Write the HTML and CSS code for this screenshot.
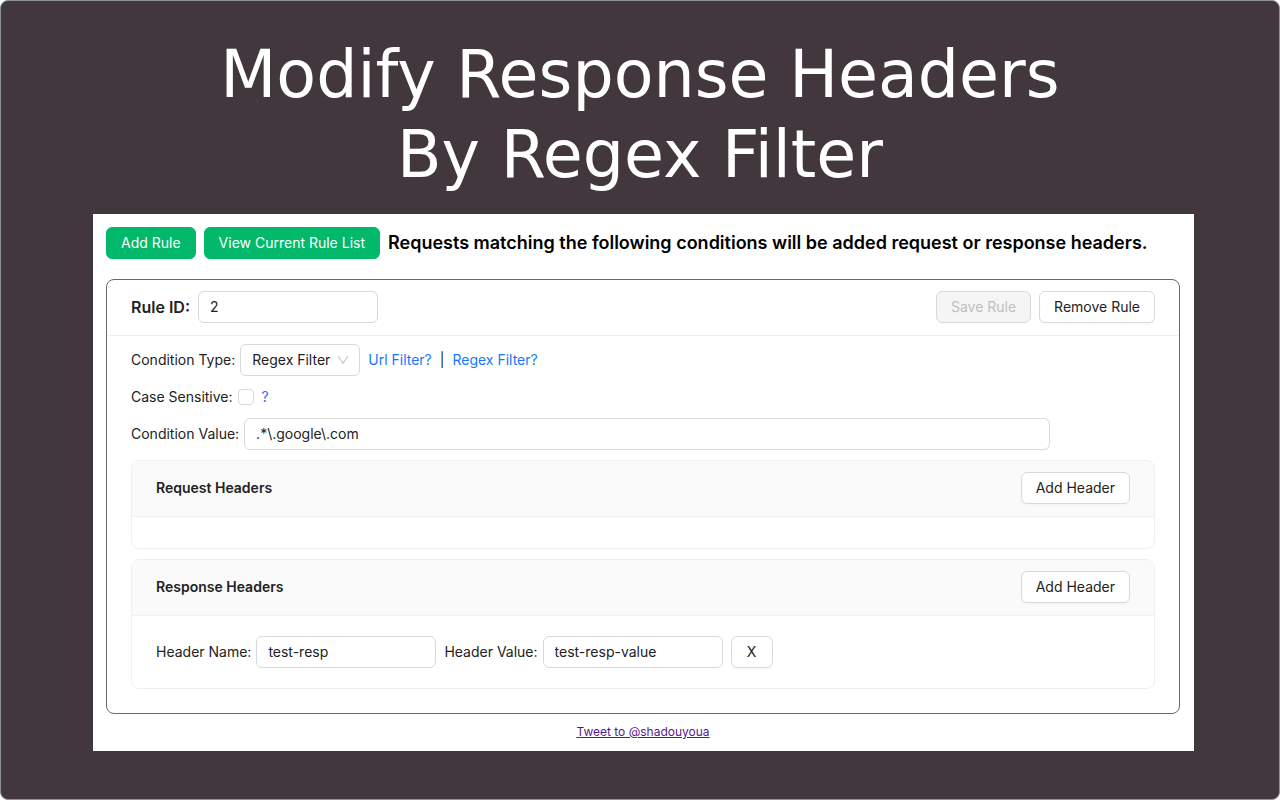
FILE: index.html
```html
<!DOCTYPE html>
<html lang="en">
<head>
<meta charset="utf-8">
<title>Modify Response Headers</title>
<link rel="stylesheet" href="styles.css">
</head>
<body>
<main class="stage">
  <h1 class="title">Modify Response Headers<br>By Regex Filter</h1>
  <section class="panel">
    <div class="toolbar">
      <button class="btn btn-primary" type="button">Add Rule</button>
      <button class="btn btn-primary" type="button">View Current Rule List</button>
      <h2 class="lead">Requests matching the following conditions will be added request or response headers.</h2>
    </div>
    <article class="rule">
      <header class="rule-head">
        <label class="rule-label" for="rule-id">Rule ID:</label>
        <input class="field" id="rule-id" type="text" value="2">
        <div class="actions">
          <button class="btn" type="button" disabled>Save Rule</button>
          <button class="btn" type="button">Remove Rule</button>
        </div>
      </header>
      <div class="rule-body">
        <div class="row">
          <label class="label" for="cond-type">Condition Type:</label>
          <span class="select-wrap">
            <select class="field select" id="cond-type"><option>Regex Filter</option><option>Url Filter</option></select>
            <svg class="chevron" viewBox="0 0 12 12" aria-hidden="true"><path d="M1 2.2 6 9.4 11 2.2" fill="none" stroke="currentColor"/></svg>
          </span>
          <a class="link" href="#url">Url Filter?</a>
          <span>|</span>
          <a class="link" href="#regex">Regex Filter?</a>
        </div>
        <div class="row">
          <label class="label" for="case">Case Sensitive:</label>
          <input class="check" id="case" type="checkbox">
          <a class="link" href="#case-help">?</a>
        </div>
        <div class="row">
          <label class="label" for="cond-value">Condition Value:</label>
          <input class="field field-wide" id="cond-value" type="text" value=".*\.google\.com">
        </div>
        <section class="group">
          <header class="group-head">
            <h3 class="group-title">Request Headers</h3>
            <button class="btn" type="button">Add Header</button>
          </header>
          <div class="group-empty"></div>
        </section>
        <section class="group">
          <header class="group-head">
            <h3 class="group-title">Response Headers</h3>
            <button class="btn" type="button">Add Header</button>
          </header>
          <div class="group-body">
            <label class="label" for="h-name">Header Name:</label>
            <input class="field" id="h-name" type="text" value="test-resp">
            <label class="label" for="h-value">Header Value:</label>
            <input class="field" id="h-value" type="text" value="test-resp-value">
            <button class="btn btn-remove" type="button">X</button>
          </div>
        </section>
      </div>
    </article>
    <footer class="foot"><a class="tweet" href="#tweet">Tweet to @shadouyoua</a></footer>
  </section>
</main>
</body>
</html>
```
FILE: styles.css
```css
* { box-sizing: border-box; }
body { margin: 0; background: #fff; color: #222; font: 14px/22px Inter, "Liberation Sans", sans-serif; }
.stage { min-height: 100vh; padding: 34px 0 48px; border: 1px solid #8e9192; border-radius: 8px; background: #42373c; }
.title { margin: 0 0 19px; color: #fff; font: 400 65px/80px "DejaVu Sans", sans-serif; text-align: center; }
.panel { margin: 0 85px 0 92px; padding: 13px 14px 8px 13px; background: #fff; }
.toolbar { display: flex; align-items: center; gap: 8px; margin-bottom: 20px; }
.lead { margin: 0; color: #000; font-size: 18px; line-height: 24px; font-weight: 600; }
.btn { height: 32px; padding: 0 14px; border: 1px solid #d9d9d9; border-radius: 6px; background: #fff; color: #222; font: inherit; white-space: nowrap; box-shadow: 0 2px 0 rgba(0, 0, 0, .02); }
.btn:disabled { background: #f5f5f5; color: #bfbfbf; box-shadow: none; }
.btn-primary { border-color: #02b96b; background: #02b96b; color: #fff; }
.btn-remove { width: 42px; }
.rule { border: 1px solid #626b70; border-radius: 8px; }
.rule-head { display: flex; align-items: center; gap: 8px; padding: 11px 24px 12px; border-bottom: 1px solid #f0f0f0; }
.rule-label { font-size: 16px; font-weight: 600; }
.actions { display: flex; gap: 8px; margin-left: auto; }
.field { width: 180px; height: 32px; padding: 0 11px 2px; border: 1px solid #d9d9d9; border-radius: 6px; background: #fff; color: #222; font: inherit; }
.field-wide { flex: 0 1 806px; }
.rule-body { display: flex; flex-direction: column; gap: 10px; padding: 8px 24px 24px; }
.row { display: flex; align-items: center; gap: 8px; }
.label { margin-right: -3px; }
.select-wrap { position: relative; display: flex; }
.select { width: 120px; padding-bottom: 0; appearance: none; }
.chevron { position: absolute; right: 11px; top: 10px; width: 12px; height: 12px; color: #b5b5b5; pointer-events: none; }
.link { color: #1677ff; text-decoration: none; }
.check { width: 16px; height: 16px; margin: 0; border: 1px solid #d9d9d9; border-radius: 4px; background: #fff; appearance: none; }
.group { border: 1px solid #f0f0f0; border-radius: 8px; overflow: hidden; }
.group-head { display: flex; align-items: center; justify-content: space-between; padding: 11px 24px 12px; border-bottom: 1px solid #f0f0f0; background: #fafafa; }
.group-title { margin: 0; font-size: 14px; font-weight: 600; }
.group-empty { height: 31px; }
.group-body { display: flex; align-items: center; gap: 8px; padding: 20px 24px; }
.foot { padding-top: 7px; text-align: center; font-size: 12px; }
.tweet { color: #551a8b; }
```
